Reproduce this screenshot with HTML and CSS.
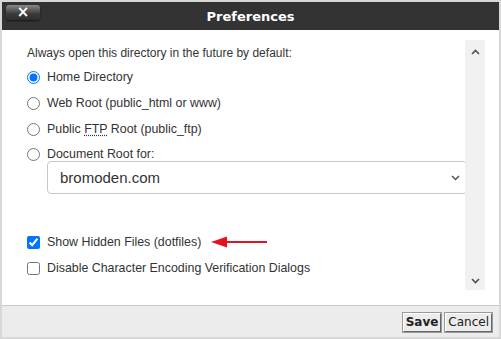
FILE: index.html
```html
<!DOCTYPE html>
<html>
<head>
<meta charset="utf-8">
<link rel="stylesheet" href="styles.css">
</head>
<body>
<div class="dialog">
  <div class="titlebar">
    <div class="tb-left"><button class="close">×</button></div>
    <div class="title">Preferences</div>
    <div class="tb-right"></div>
  </div>
  <div class="content">
    <div class="scroller">
      <div class="pane">
        <p class="intro">Always open this directory in the future by default:</p>
        <label class="row"><input type="radio" name="dir" checked><span>Home Directory</span></label>
        <label class="row"><input type="radio" name="dir"><span>Web Root (public_html or www)</span></label>
        <label class="row"><input type="radio" name="dir"><span>Public <abbr class="abbr">FTP</abbr> Root (public_ftp)</span></label>
        <label class="row last"><input type="radio" name="dir"><span>Document Root for:</span></label>
        <div class="select">
          <span>bromoden.com</span>
          <svg class="chev" width="9" height="6" viewBox="0 0 9 6"><path d="M1 1 L4.5 4.5 L8 1" fill="none" stroke="#555" stroke-width="1.5"/></svg>
        </div>
        <label class="row check first"><input type="checkbox" checked><span>Show Hidden Files (dotfiles)</span>
          <svg class="arrow" width="56" height="12" viewBox="0 0 56 12"><path d="M0 6 L16 0.5 L16 11.5 Z" fill="#e3141f"/><rect x="14" y="5" width="42" height="2" fill="#e3141f"/></svg>
        </label>
        <label class="row check"><input type="checkbox"><span>Disable Character Encoding Verification Dialogs</span></label>
      </div>
      <div class="sbar">
        <svg width="9" height="6" viewBox="0 0 9 6"><path d="M1 5 L4.5 1.5 L8 5" fill="none" stroke="#505050" stroke-width="1.6"/></svg>
        <svg width="9" height="6" viewBox="0 0 9 6"><path d="M1 1 L4.5 4.5 L8 1" fill="none" stroke="#505050" stroke-width="1.6"/></svg>
      </div>
    </div>
  </div>
  <div class="footer">
    <button class="btn save">Save</button>
    <button class="btn">Cancel</button>
  </div>
</div>
</body>
</html>
```
FILE: styles.css
```css
html, body {
  margin: 0;
  padding: 0;
  background: #dcdcdc;
}
.dialog {
  width: 501px;
  height: 339px;
  box-sizing: border-box;
  border: 2px solid #d8d8d8;
  display: flex;
  flex-direction: column;
  background: #fff;
}
.titlebar {
  height: 28px;
  background: #333333;
  display: grid;
  grid-template-columns: 1fr auto 1fr;
  align-items: center;
}
.tb-left {
  display: flex;
  align-items: flex-start;
  align-self: start;
  padding: 3px 0 0 4px;
}
.close {
  width: 34px;
  height: 15px;
  padding: 0;
  border: none;
  border-radius: 3px;
  background: linear-gradient(#8a8a8a 0%, #5a5a5a 35%, #3a3a3a 60%, #2e2e2e 100%);
  box-shadow: 0 1px 2px rgba(0,0,0,0.6);
  color: #fff;
  font: bold 15px/15px "DejaVu Sans", sans-serif;
}
.title {
  color: #fff;
  font: bold 13px "DejaVu Sans", Verdana, sans-serif;
  padding-top: 1px;
}
.content {
  flex: 1;
  background: #fff;
  display: flex;
  padding: 10px 14px 15px 15px;
}
.scroller {
  flex: 1;
  display: flex;
  overflow: hidden;
}
.pane {
  flex: 1;
  padding: 6px 0 0 10px;
  font: 12px "Liberation Sans", Arial, sans-serif;
  color: #333;
}
.intro {
  margin: 0 0 4px 0;
  line-height: 14px;
}
.row {
  display: flex;
  align-items: center;
  height: 26px;
  white-space: nowrap;
  font-size: 12.4px;
}
.row.last {
  height: 24px;
}
.row input {
  margin: 0 7px 0 0;
  width: 13px;
  height: 13px;
  accent-color: #0075ff;
}
.abbr {
  text-decoration: underline dotted;
  text-underline-offset: 2px;
}
.select {
  margin: -5px -2px 0 20px;
  height: 33px;
  box-sizing: border-box;
  border: 1px solid #c8c8c8;
  border-radius: 4px;
  display: flex;
  align-items: center;
  justify-content: space-between;
  padding: 0 6px 0 12px;
  font: 15px "Liberation Sans", Arial, sans-serif;
  color: #333;
}
.chev {
  display: block;
}
.check.first {
  margin-top: 35px;
}
.arrow {
  margin-left: 10px;
}
.sbar {
  width: 20px;
  background: #f1f1f1;
  display: flex;
  flex-direction: column;
  justify-content: space-between;
  align-items: center;
  padding: 9px 0 6px;
}
.sbar svg {
  display: block;
}
.footer {
  height: 32px;
  box-sizing: border-box;
  background: #ececec;
  border-top: 1px solid #c8c8c8;
  display: flex;
  justify-content: flex-end;
  align-items: center;
  gap: 4px;
  padding: 1px 7px 0 0;
}
.btn {
  height: 19px;
  padding: 0 2px;
  border: 1px solid #a0a0a0;
  border-right-color: #666;
  border-bottom-color: #666;
  border-top-color: #fff;
  border-left-color: #fff;
  background: #ececec;
  font: 12px "DejaVu Sans", Verdana, sans-serif;
  color: #222;
  outline: 1px solid #9a9a9a;
}
.btn.save {
  font-weight: bold;
}
```
